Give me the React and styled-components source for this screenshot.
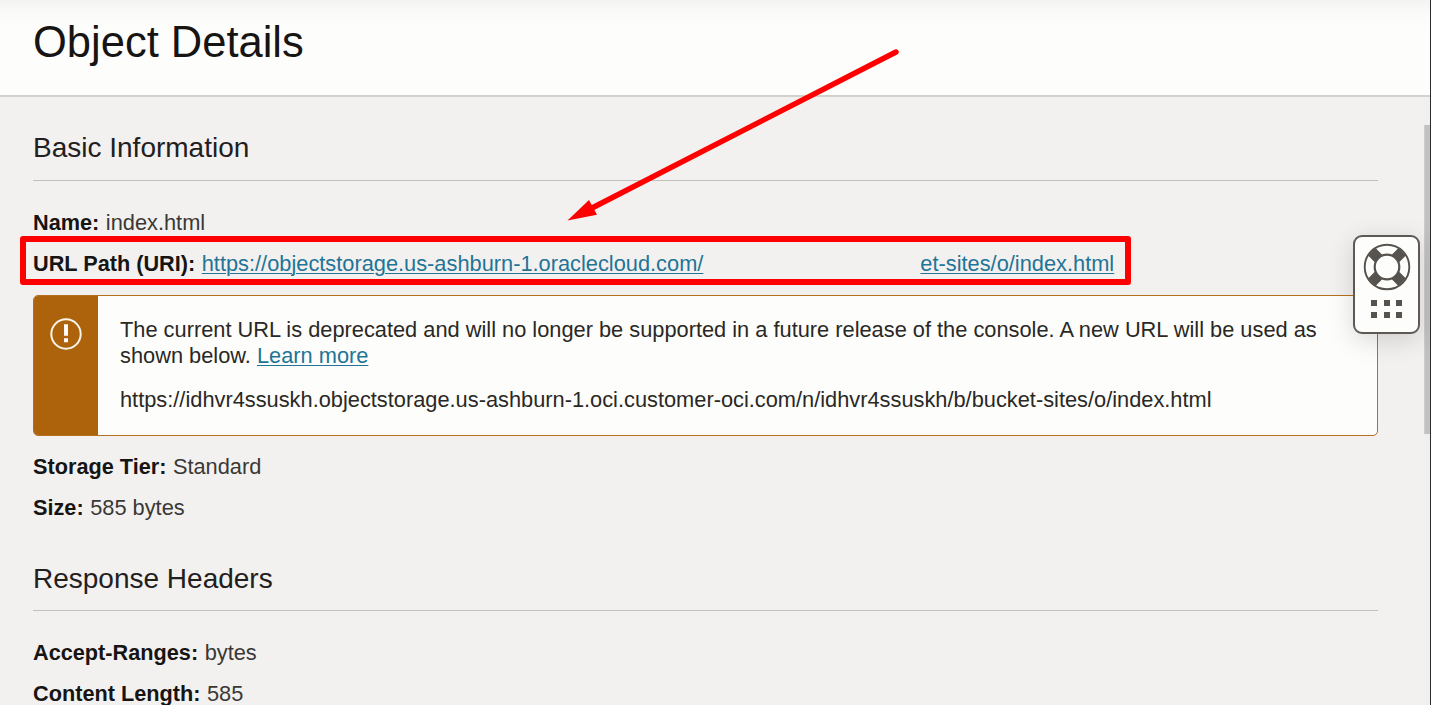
import React from "react";
import styled, { createGlobalStyle } from "styled-components";

const GlobalStyle = createGlobalStyle`
  * { box-sizing: border-box; }
  body {
    margin: 0;
    overflow: hidden;
    background: #f3f1f0;
    color: #161513;
    font-family: "Liberation Sans", Arial, sans-serif;
  }
`;

const Page = styled.div`
  position: relative;
  width: 1431px;
  height: 705px;
  overflow: hidden;
  display: flex;
  flex-direction: column;
  border-right: 1px solid #2a2c2e;
`;

const Header = styled.header`
  flex: none;
  height: 97px;
  padding: 17px 33px 0;
  background: linear-gradient(#f3f3f1 0, #fafaf8 12px, #fdfdfb 28px, #fdfefb 100%);
  border-bottom: 2px solid #d4d1cc;
`;

const Title = styled.h1`
  margin: 0;
  font-size: 43.5px;
  line-height: 50px;
  font-weight: 400;
`;

const Body = styled.div`
  flex: 1;
  min-height: 0;
  display: flex;
  justify-content: space-between;
`;

const Content = styled.main`
  width: 1378px;
  padding-left: 33px;
`;

const Scrollbar = styled.div`
  width: 6px;
  padding-top: 28px;
  background: #f0f0f1;
`;

const Thumb = styled.div`
  height: 309px;
  background: #c1c1c1;
  border-left: 1px solid #cdcdcd;
`;

const Heading = styled.h2`
  margin: 0 0 21px;
  padding-top: 35px;
  height: ${(p) => p.$height}px;
  border-bottom: 1px solid #c4bfbb;
  font-size: 28px;
  line-height: 32px;
  font-weight: 400;
  color: #22201e;
`;

const Row = styled.div`
  position: relative;
  display: flex;
  align-items: center;
  height: 41px;
  font-size: 21.8px;
  white-space: pre;
  color: #3a3835;
`;

const Label = styled.b`
  margin-right: 6.5px;
  color: #161513;
  font-size: 21.7px;
`;

const Link = styled.a`
  color: #227496;
  text-decoration: underline;
  text-decoration-thickness: 1px;
  text-underline-offset: 2px;
`;

const Redacted = styled.span`
  width: 217px;
`;

const Highlight = styled.div`
  position: absolute;
  left: -13px;
  top: -7px;
  width: 1111px;
  height: 49px;
  border: 6px solid #fe0000;
  border-radius: 3px;
`;

const Alert = styled.section`
  display: flex;
  height: 141px;
  margin: 11px 0 10px;
  border: 1px solid #b5701d;
  border-radius: 5px;
  background: #fdfefb;
  overflow: hidden;
`;

const AlertSide = styled.div`
  width: 64px;
  padding: 21px 0 0 15px;
  background: #ac630c;
`;

const AlertBody = styled.div`
  padding: 21px 0 0 22px;
  font-size: 21.8px;
  line-height: 25.5px;
  color: #2a2825;
  white-space: nowrap;

  p { margin: 0 0 19px; }
`;

const Help = styled.button`
  position: absolute;
  left: 1353px;
  top: 235px;
  width: 67px;
  height: 99px;
  padding: 6px 0 0;
  display: flex;
  flex-direction: column;
  align-items: center;
  gap: 9px;
  border: 2px solid #5d5955;
  border-radius: 9px;
  background: #fdfefb;
  box-shadow: 0 6px 26px rgba(0, 0, 0, 0.15);
`;

const Grip = styled.div`
  display: grid;
  grid-template-columns: repeat(3, 6px);
  grid-auto-rows: 6px;
  gap: 6px 6.5px;

  i { background: #56524e; }
`;

const Arrow = styled.svg`
  position: absolute;
  left: 560px;
  top: 40px;
`;

const WarningIcon = () => (
  <svg width="34" height="34" viewBox="0 0 34 34">
    <circle cx="17" cy="17" r="14.7" fill="none" stroke="#fbf4ea" strokeWidth="2" />
    <path d="M15 7.3h4v11.5h-4zM15 21.2h4v4h-4z" fill="#fffaf3" />
  </svg>
);

const LifeBuoy = () => (
  <svg width="48" height="48" viewBox="0 0 48 48" fill="none" stroke="#56524e">
    <path d="M8.8 8.8 15.5 15.5M39.2 8.8 32.5 15.5M8.8 39.2 15.5 32.5M39.2 39.2 32.5 32.5" strokeWidth="10.5" />
    <circle cx="24" cy="24" r="22.3" strokeWidth="1.9" />
    <circle cx="24" cy="24" r="12.3" strokeWidth="2.2" />
  </svg>
);

const Field = ({ label, children }) => (
  <Row>
    <Label>{label}:</Label>
    {children}
  </Row>
);

export default function App() {
  return (
    <>
      <GlobalStyle />
      <Page>
        <Header><Title>Object Details</Title></Header>
        <Body>
          <Content>
            <Heading $height={84}>Basic Information</Heading>
            <Field label="Name">index.html</Field>
            <Row>
              <Label>URL Path (URI):</Label>
              <Link>https://objectstorage.us-ashburn-1.oraclecloud.com/</Link>
              <Redacted />
              <Link>et-sites/o/index.html</Link>
              <Highlight />
            </Row>
            <Alert>
              <AlertSide><WarningIcon /></AlertSide>
              <AlertBody>
                <p>
                  The current URL is deprecated and will no longer be supported in a future release of the console. A new URL will be used as
                  <br />
                  shown below. <Link>Learn more</Link>
                </p>
                <p>https://idhvr4ssuskh.objectstorage.us-ashburn-1.oci.customer-oci.com/n/idhvr4ssuskh/b/bucket-sites/o/index.html</p>
              </AlertBody>
            </Alert>
            <Field label="Storage Tier">Standard</Field>
            <Field label="Size">585 bytes</Field>
            <Heading $height={83}>Response Headers</Heading>
            <Field label="Accept-Ranges">bytes</Field>
            <Field label="Content Length">585</Field>
          </Content>
          <Scrollbar><Thumb /></Scrollbar>
        </Body>
        <Help aria-label="Help">
          <LifeBuoy />
          <Grip><i /><i /><i /><i /><i /><i /></Grip>
        </Help>
        <Arrow width="350" height="190" viewBox="0 0 350 190">
          <path d="M336 12 32 168" stroke="#fe0000" strokeWidth="5.5" strokeLinecap="round" />
          <path d="M7.5 180.5 29 160l8 14.8z" fill="#fe0000" />
        </Arrow>
      </Page>
    </>
  );
}
